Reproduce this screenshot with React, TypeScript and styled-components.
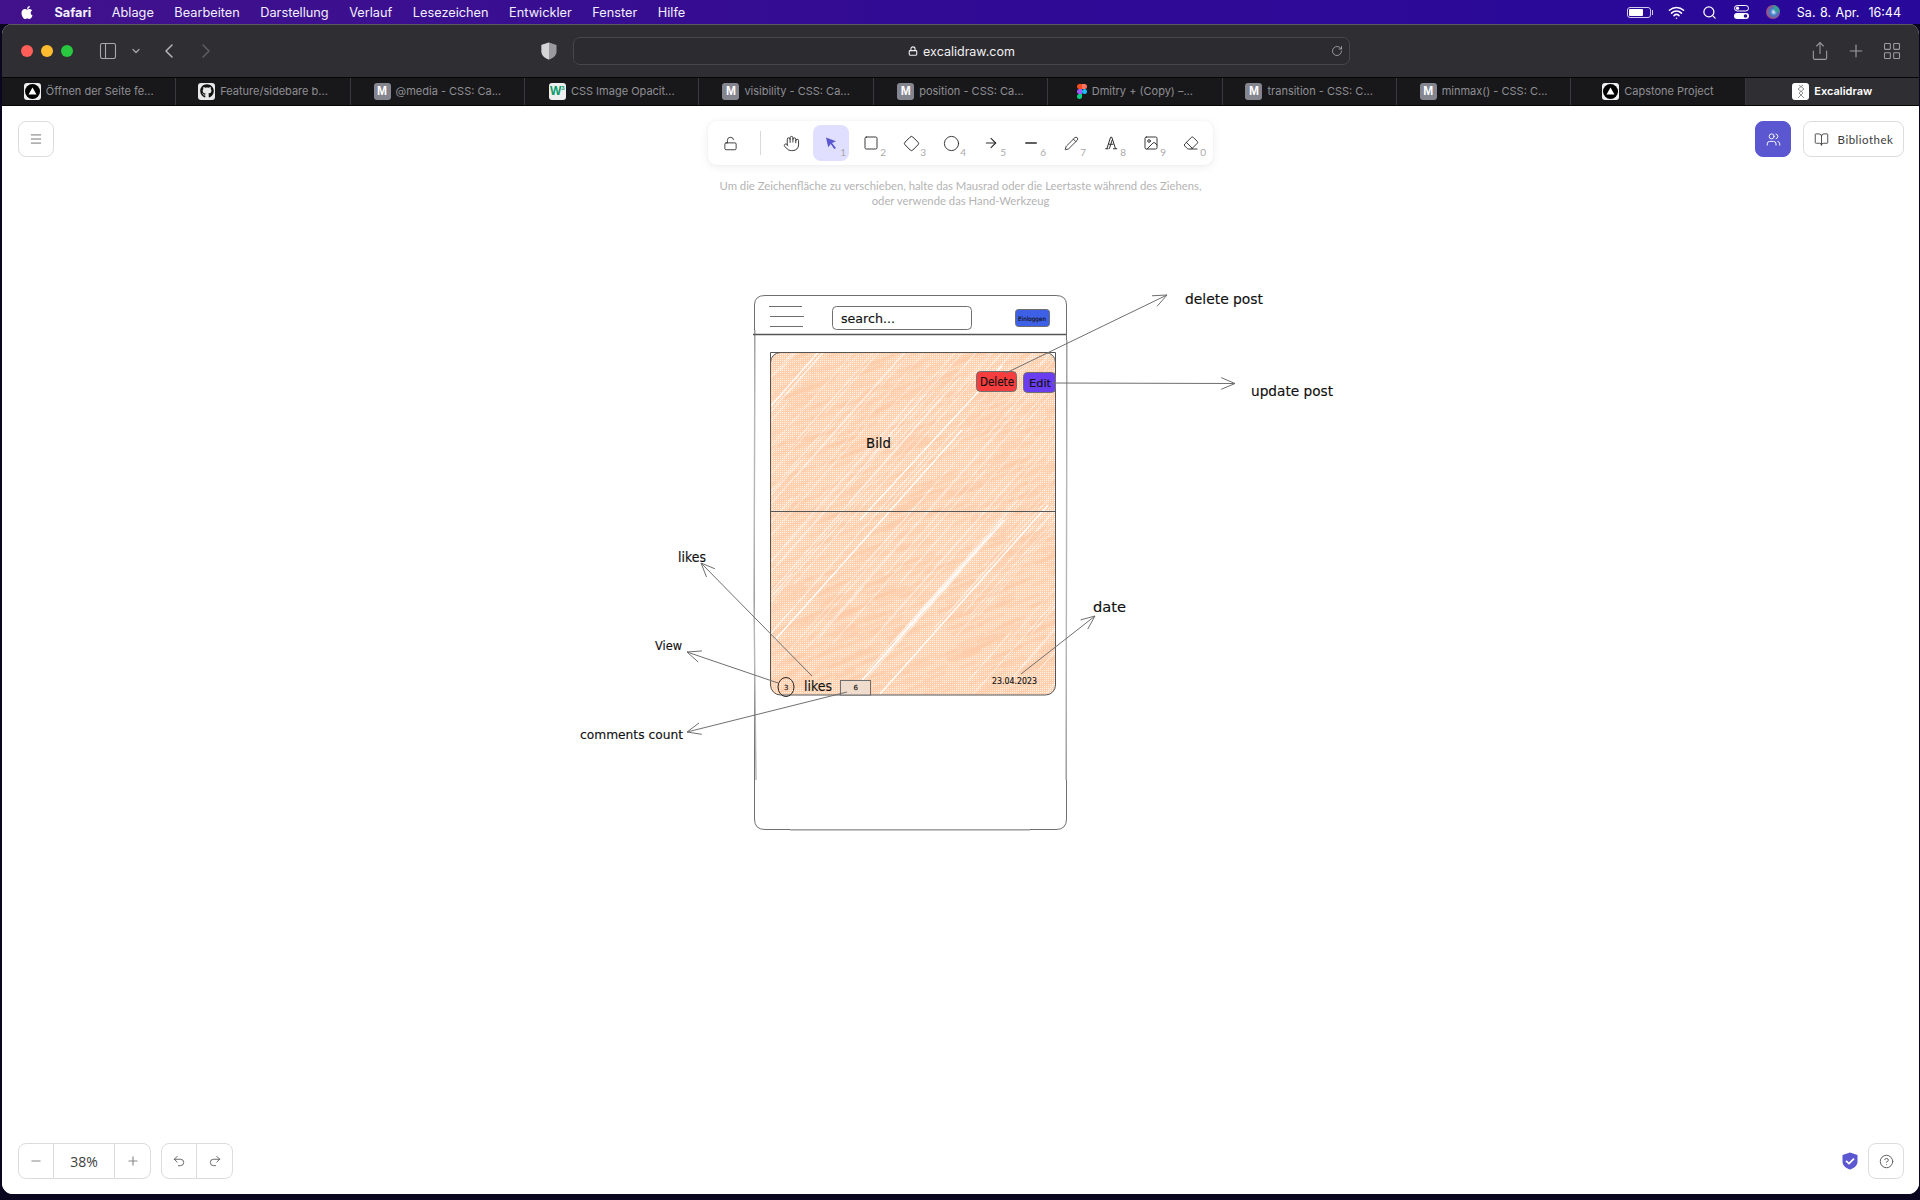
import React from "react";
import styled, { createGlobalStyle } from "styled-components";
import {
  ArrowRight,
  BookOpen,
  ChevronDown,
  ChevronLeft,
  ChevronRight,
  Circle,
  CircleHelp,
  Diamond,
  Eraser,
  Hand,
  Image as ImageIcon,
  LayoutGrid,
  Lock,
  LockOpen,
  Menu,
  Minus,
  PanelLeft,
  Pencil,
  Plus,
  Redo2,
  RotateCw,
  Search,
  Share,
  Square,
  Undo2,
  Users,
  Wifi,
} from "lucide-react";
import { FaApple, FaGithub } from "react-icons/fa";

const GlobalStyle = createGlobalStyle`
  html, body { margin: 0; padding: 0; background: #0b0620; }
  body { font-family: "Liberation Sans", Arial, sans-serif; }
  * { box-sizing: border-box; }
`;

const Screen = styled.div`
  width: 1920px;
  height: 1200px;
  display: flex;
  flex-direction: column;
  overflow: hidden;
  background: #0b0620;
`;

const MenuBar = styled.header`
  height: 24px;
  flex: none;
  display: flex;
  align-items: center;
  justify-content: space-between;
  padding: 0 19px 0 20px;
  color: #fff;
  font-family: "Inter", sans-serif;
  font-size: 12.5px;
  background: linear-gradient(90deg, #42128c 0%, #2f0a95 55%, #28089a 100%);
`;

const MenuList = styled.nav`
  display: flex;
  align-items: center;
  gap: 20.5px;
  font-size: 12.75px;
`;

const AppleMark = styled.span`
  display: flex;
  width: 14px;
`;

const MenuItem = styled.span<{ $bold?: boolean }>`
  font-weight: ${(p) => (p.$bold ? 700 : 400)};
  color: #f2effa;
`;

const StatusArea = styled.div`
  display: flex;
  align-items: center;
  gap: 17px;
`;

const BatteryBody = styled.span`
  position: relative;
  display: block;
  width: 24px;
  height: 11px;
  border: 1px solid #cfc9ea;
  border-radius: 3px;
  padding: 1px;
  &::before {
    content: "";
    display: block;
    width: 14px;
    height: 100%;
    background: #fff;
    border-radius: 1px;
  }
  &::after {
    content: "";
    position: absolute;
    right: -3px;
    top: 2px;
    width: 1px;
    height: 5px;
    background: #cfc9ea;
  }
`;

const Clock = styled.span`
  word-spacing: 1px;
  white-space: pre;
`;

const BrowserWindow = styled.div`
  flex: 1;
  display: flex;
  flex-direction: column;
  margin: 0 1px 6px 2px;
  border-radius: 10px 10px 11px 11px;
  overflow: hidden;
  background: #fff;
`;

const BrowserBar = styled.div`
  height: 53px;
  flex: none;
  display: flex;
  align-items: center;
  padding-left: 19px;
  background: #2f2e33;
  border-top: 1px solid #5b5a60;
  color: #a9a9ad;
`;

const TrafficLights = styled.div`
  display: flex;
  gap: 8px;
  width: 77px;
`;

const Light = styled.span<{ $color: string }>`
  width: 12px;
  height: 12px;
  border-radius: 50%;
  background: ${(p) => p.$color};
`;

const BarGroup = styled.div`
  display: flex;
  align-items: center;
  width: 475px;
  color: #a9a9ad;
`;

const SidebarChevron = styled.span`
  display: flex;
  margin-left: 12px;
`;

const BackButton = styled.span<{ $dim?: boolean }>`
  display: flex;
  margin-left: ${(p) => (p.$dim ? "13px" : "15px")};
  color: ${(p) => (p.$dim ? "#5e5d62" : "#b5b5b9")};
`;

const BarSpacer = styled.span`
  flex: 1;
`;

const UrlBar = styled.div`
  width: 777px;
  height: 28px;
  position: relative;
  display: flex;
  align-items: center;
  justify-content: center;
  gap: 5px;
  border: 1px solid #47464b;
  border-radius: 7px;
  background: #2c2b30;
  color: #f0f0f2;
  font-family: "Inter", sans-serif;
  font-size: 12.5px;
`;

const ReloadSlot = styled.span`
  position: absolute;
  right: 6px;
  top: 7px;
  display: flex;
  color: #b0b0b4;
`;

const BarActions = styled.div`
  margin-left: auto;
  display: flex;
  align-items: center;
  gap: 16px;
  padding-right: 17px;
  color: #9c9ca0;
`;

const ShieldSlot = styled.span`
  display: flex;
  width: 16px;
  margin-right: 16px;
`;

const TabBar = styled.div`
  height: 29px;
  flex: none;
  display: flex;
  background: #18181b;
  border-top: 1px solid #050505;
  border-bottom: 1px solid #050505;
`;

const Tab = styled.div<{ $active?: boolean }>`
  flex: 1;
  min-width: 0;
  display: flex;
  align-items: center;
  justify-content: center;
  gap: 5px;
  padding-bottom: 1px;
  font-family: "Inter", sans-serif;
  font-size: 11px;
  white-space: nowrap;
  color: ${(p) => (p.$active ? "#ffffff" : "#8f8f93")};
  font-weight: ${(p) => (p.$active ? 600 : 400)};
  background: ${(p) => (p.$active ? "#2f2e33" : "transparent")};
  border-right: 1px solid #3a3a3e;
  &:last-child {
    border-right: 0;
  }
`;

const Favicon = styled.span<{ $bg: string; $fg?: string }>`
  width: 17px;
  height: 17px;
  flex: none;
  display: flex;
  align-items: center;
  justify-content: center;
  border-radius: 3px;
  background: ${(p) => p.$bg};
  color: ${(p) => p.$fg || "#fff"};
  font-family: "Liberation Sans", sans-serif;
  font-size: 12px;
  font-weight: 700;
  line-height: 1;
`;

const FaviconSup = styled.sup`
  font-size: 6px;
  margin-top: -6px;
`;

const CanvasArea = styled.main`
  flex: 1;
  position: relative;
  background: #fff;
`;

const SketchLayer = styled.svg`
  position: absolute;
  inset: 0;
  width: 100%;
  height: 100%;
`;

const Overlay = styled.div`
  position: relative;
  height: 100%;
  display: flex;
  flex-direction: column;
  justify-content: space-between;
  padding: 15px 15px 15px 16px;
`;

const TopRow = styled.div`
  display: grid;
  grid-template-columns: 1fr auto 1fr;
  align-items: start;
`;

const IconButton = styled.button<{ $primary?: boolean }>`
  width: 36px;
  height: 36px;
  display: flex;
  align-items: center;
  justify-content: center;
  padding: 0;
  border: 1px solid ${(p) => (p.$primary ? "#5b57d1" : "#dcdcdc")};
  border-radius: 8px;
  background: ${(p) => (p.$primary ? "#5b57d1" : "#fff")};
  color: ${(p) => (p.$primary ? "#fff" : "#5a5a5a")};
`;

const ToolColumn = styled.div`
  display: flex;
  flex-direction: column;
  align-items: center;
  margin-left: -1px;
`;

const ToolBar = styled.div`
  width: 505px;
  height: 44px;
  display: flex;
  align-items: center;
  gap: 4px;
  padding: 0 2px 0 4px;
  background: #fff;
  border-radius: 8px;
  box-shadow: 0 0 1px rgba(0, 0, 0, 0.12), 0 2px 10px rgba(0, 0, 0, 0.07);
`;

const ToolDivider = styled.span`
  width: 1px;
  height: 24px;
  margin: 0 8px;
  background: #d9d9d9;
  flex: none;
`;

const ToolButton = styled.span<{ $active?: boolean }>`
  position: relative;
  width: 36px;
  height: 36px;
  flex: none;
  display: flex;
  align-items: center;
  justify-content: center;
  border-radius: 8px;
  background: ${(p) => (p.$active ? "#e0dfff" : "transparent")};
  color: ${(p) => (p.$active ? "#5b57d1" : "#2b2b2b")};
`;

const ToolKey = styled.span`
  position: absolute;
  right: 3px;
  bottom: 4px;
  font-family: "Lato", sans-serif;
  font-size: 10px;
  line-height: 1;
  color: #a9a9a9;
`;

const HintText = styled.p`
  margin: 13px 0 0;
  text-align: center;
  font-family: "Lato", sans-serif;
  font-size: 11.3px;
  line-height: 15px;
  color: #b4b4b4;
  white-space: nowrap;
`;

const RightTools = styled.div`
  display: flex;
  justify-content: flex-end;
  gap: 12px;
`;

const LibraryButton = styled.button`
  width: 101px;
  height: 36px;
  display: flex;
  align-items: center;
  justify-content: center;
  gap: 9px;
  padding: 0;
  border: 1px solid #dcdcdc;
  border-radius: 8px;
  background: #fff;
  color: #3b3b3b;
  font-family: "Lato", sans-serif;
  font-size: 11.5px;
  letter-spacing: 0.5px;
`;

const BottomRow = styled.div`
  display: flex;
  align-items: center;
`;

const ButtonGroup = styled.div`
  height: 36px;
  display: flex;
  margin-right: 10px;
  border: 1px solid #dcdcdc;
  border-radius: 8px;
  background: #fff;
  overflow: hidden;
`;

const GroupCell = styled.span<{ $wide?: boolean; $dark?: boolean }>`
  width: ${(p) => (p.$wide ? "61px" : "35px")};
  display: flex;
  align-items: center;
  justify-content: center;
  color: ${(p) => (p.$wide ? "#3d3d3d" : p.$dark ? "#555" : "#8a8a8a")};
  font-family: "Open Sans", sans-serif;
  font-size: 14px;
  border-right: 1px solid #dcdcdc;
  &:last-child {
    border-right: 0;
  }
`;

const FooterEnd = styled.div`
  margin-left: auto;
  display: flex;
  align-items: center;
  gap: 10px;
`;

const SketchText = styled.text<{ $size?: number }>`
  font-family: "DejaVu Sans", sans-serif;
  font-size: ${(p) => p.$size || 14}px;
  fill: #111;
  stroke: #111;
  stroke-width: 0.15px;
`;

const tabs = [
  { kind: "vercel", title: "Öffnen der Seite fe..." },
  { kind: "github", title: "Feature/sidebare b..." },
  { kind: "mdn", title: "@media - CSS: Ca..." },
  { kind: "w3", title: "CSS Image Opacit..." },
  { kind: "mdn", title: "visibility - CSS: Ca..." },
  { kind: "mdn", title: "position - CSS: Ca..." },
  { kind: "figma", title: "Dmitry + (Copy) –..." },
  { kind: "mdn", title: "transition - CSS: C..." },
  { kind: "mdn", title: "minmax() - CSS: C..." },
  { kind: "vercel", title: "Capstone Project" },
  { kind: "excalidraw", title: "Excalidraw", active: true },
];

const menuItems = [
  "Ablage",
  "Bearbeiten",
  "Darstellung",
  "Verlauf",
  "Lesezeichen",
  "Entwickler",
  "Fenster",
  "Hilfe",
];

const TabIcon = ({ kind }: { kind: string }) => {
  if (kind === "mdn") return <Favicon $bg="#85858f">M</Favicon>;
  if (kind === "github")
    return (
      <Favicon $bg="#e8e8e8" $fg="#111">
        <FaGithub size={14} />
      </Favicon>
    );
  if (kind === "w3")
    return (
      <Favicon $bg="#efefef" $fg="#0a9a68">
        W<FaviconSup>3</FaviconSup>
      </Favicon>
    );
  if (kind === "figma")
    return (
      <svg width="10" height="17" viewBox="0 0 10 15">
        <path d="M0 2.5A2.5 2.5 0 0 1 2.5 0H5v5H2.5A2.5 2.5 0 0 1 0 2.5z" fill="#f24e1e" />
        <path d="M5 0h2.5a2.5 2.5 0 0 1 0 5H5z" fill="#ff7262" />
        <path d="M0 7.5A2.5 2.5 0 0 1 2.5 5H5v5H2.5A2.5 2.5 0 0 1 0 7.5z" fill="#a259ff" />
        <circle cx="7.5" cy="7.5" r="2.5" fill="#1abcfe" />
        <path d="M0 12.5A2.5 2.5 0 0 1 2.5 10H5v2.5a2.5 2.5 0 0 1-5 0z" fill="#0acf83" />
      </svg>
    );
  if (kind === "excalidraw")
    return (
      <Favicon $bg="#fff">
        <svg width="12" height="15" viewBox="0 0 12 15" fill="none" stroke="#777" strokeWidth="0.8">
          <path d="M4 1l5 4-5 4 5 5M8 1L3 5l5 4-5 5" />
        </svg>
      </Favicon>
    );
  return (
    <Favicon $bg="#efefef">
      <svg width="15" height="15" viewBox="0 0 15 15">
        <circle cx="7.5" cy="7.5" r="7.5" fill="#000" />
        <path d="M7.5 3.6l4 7h-8z" fill="#fff" />
      </svg>
    </Favicon>
  );
};

// small seeded random, so the hatching looks the same every run
const makeRandom = (seed: number) => () => {
  seed = (seed * 16807) % 2147483647;
  return (seed - 1) / 2147483646;
};

const CardHatch = () => {
  const rnd = makeRandom(4711);
  const blotches = Array.from({ length: 650 }, (_, i) => {
    const x = 765 + rnd() * 292;
    const y = 352 + rnd() * 345;
    const len = 10 + rnd() * 22;
    return <line key={i} x1={x} y1={y} x2={x + len} y2={y - len * 0.4} />;
  });
  const streaks = Array.from({ length: 170 }, (_, i) => {
    const x = 640 + rnd() * 560;
    const y = 360 + rnd() * 340;
    const len = 40 + rnd() * 200;
    return (
      <line
        key={i}
        x1={x}
        y1={y}
        x2={x + len * 0.88}
        y2={y - len}
        strokeOpacity={0.45 + rnd() * 0.55}
      />
    );
  });
  return (
    <g clipPath="url(#cardClip)">
      <rect x="770" y="352" width="286" height="343" fill="url(#dither)" />
      <g stroke="#ffcba7" strokeOpacity="0.4" strokeWidth="3.5" strokeLinecap="round">
        {blotches}
      </g>
      <g stroke="#fff" strokeWidth="0.8">
        {streaks}
        <line x1="850" y1="694" x2="1004" y2="520" strokeWidth="1.5" />
        <line x1="880" y1="694" x2="1048" y2="505" strokeWidth="1.3" />
        <line x1="775" y1="640" x2="962" y2="430" strokeWidth="1.3" />
        <line x1="860" y1="520" x2="1002" y2="366" strokeWidth="1.3" />
      </g>
    </g>
  );
};

const ArrowLine = ({ x1, y1, x2, y2 }: { x1: number; y1: number; x2: number; y2: number }) => {
  const angle = Math.atan2(y2 - y1, x2 - x1);
  const head = 15;
  const spread = 0.4;
  const ax = x2 - head * Math.cos(angle - spread);
  const ay = y2 - head * Math.sin(angle - spread);
  const bx = x2 - head * Math.cos(angle + spread);
  const by = y2 - head * Math.sin(angle + spread);
  return <path d={`M${x1} ${y1}L${x2} ${y2}M${ax} ${ay}L${x2} ${y2}L${bx} ${by}`} />;
};

const Drawing = () => (
  <SketchLayer viewBox="2 106 1917 1088" preserveAspectRatio="none">
    <defs>
      <pattern id="dither" patternUnits="userSpaceOnUse" width="2" height="2">
        <rect width="2" height="2" fill="#ffd1af" />
        <rect width="1" height="1" fill="#fff5ec" />
      </pattern>
      <clipPath id="cardClip">
        <rect x="770.5" y="352.5" width="285" height="342.5" rx="10" />
      </clipPath>
    </defs>
    <CardHatch />
    <g fill="none" stroke="#6f6f6f" strokeWidth="1">
      <path d="M765 295.5H1056Q1066.5 295.5 1066.5 305V819Q1066.5 829.5 1056 829.5H765Q754.5 829.5 754.5 819V305Q754.5 295.5 765 295.5Z" />
      <path d="M755 330L754 600L756 780M1067 340L1066 780M790 830H1030" stroke="#b5b5b5" strokeWidth="1.4" />
      <path d="M753 334.5H1066" strokeWidth="1.4" stroke="#555" />
      <path d="M769 306.5H802M770 316.5H804M770 326.5H803" strokeWidth="1.2" />
      <rect x="832.5" y="306.5" width="139" height="23" rx="4" />
      <rect x="770.5" y="352.5" width="285" height="342.5" rx="10" stroke="#555" />
      <path d="M770.5 352.5H1055.5V511.5H770.5Z" stroke="#555" />
      <rect x="1015.5" y="309.5" width="34" height="17" rx="3" fill="#3e60e6" />
      <rect x="976.5" y="371.5" width="40" height="20" rx="4" fill="#f63e3e" />
      <rect x="1023.5" y="372.5" width="32" height="20" rx="4" fill="#6a3ef0" />
      <ellipse cx="786" cy="687" rx="8" ry="9.5" stroke="#222" />
      <rect x="840.5" y="680.5" width="30" height="14.5" fill="#efdccd" />
      <ArrowLine x1={1006} y1={373} x2={1167} y2={295} />
      <ArrowLine x1={1052} y1={383} x2={1235} y2={383.5} />
      <ArrowLine x1={812} y1={676} x2={701} y2={563} />
      <ArrowLine x1={778} y1={683} x2={687} y2={652} />
      <ArrowLine x1={847} y1={692} x2={687} y2={732} />
      <ArrowLine x1={1021} y1={674} x2={1095} y2={616} />
    </g>
    <SketchText x="841" y="323" $size={13} textLength={54} lengthAdjust="spacingAndGlyphs">search...</SketchText>
    <SketchText x="1018" y="321" $size={6} textLength={28} lengthAdjust="spacingAndGlyphs">Einloggen</SketchText>
    <SketchText x="980" y="386" $size={12} textLength={34} lengthAdjust="spacingAndGlyphs">Delete</SketchText>
    <SketchText x="1029" y="387" $size={11} textLength={22} lengthAdjust="spacingAndGlyphs">Edit</SketchText>
    <SketchText x="866" y="448" $size={14} textLength={25} lengthAdjust="spacingAndGlyphs">Bild</SketchText>
    <SketchText x="1185" y="304" $size={14} textLength={78} lengthAdjust="spacingAndGlyphs">delete post</SketchText>
    <SketchText x="1251" y="396" $size={14} textLength={82} lengthAdjust="spacingAndGlyphs">update post</SketchText>
    <SketchText x="678" y="562" $size={14} textLength={28} lengthAdjust="spacingAndGlyphs">likes</SketchText>
    <SketchText x="655" y="650" $size={13} textLength={27} lengthAdjust="spacingAndGlyphs">View</SketchText>
    <SketchText x="580" y="739" $size={13} textLength={103} lengthAdjust="spacingAndGlyphs">comments count</SketchText>
    <SketchText x="804" y="691" $size={14} textLength={28} lengthAdjust="spacingAndGlyphs">likes</SketchText>
    <SketchText x="784" y="690" $size={7}>3</SketchText>
    <SketchText x="853.5" y="690" $size={7}>6</SketchText>
    <SketchText x="992" y="684" $size={8} textLength={45} lengthAdjust="spacingAndGlyphs">23.04.2023</SketchText>
    <SketchText x="1093" y="612" $size={14} textLength={33} lengthAdjust="spacingAndGlyphs">date</SketchText>
  </SketchLayer>
);

const TextToolIcon = () => (
  <svg width="14" height="14" viewBox="0 0 17 17" fill="none" stroke="currentColor" strokeWidth="1.2">
    <path d="M1.5 15.5h4M11 15.5h5M3.5 15.5L8 1.5h1.5l4.5 14M5.5 10h6M6.5 15.5L10 4.5" />
  </svg>
);

const ToolIcons: { key: string; icon: React.ReactNode; active?: boolean }[] = [
  {
    key: "1",
    active: true,
    icon: (
      <svg width="16" height="16" viewBox="0 0 16 16">
        <path d="M3 2.5l10 3.8-4 1.6 4 5-1.8 1-3.4-5-2.6 3.3z" fill="currentColor" />
      </svg>
    ),
  },
  { key: "2", icon: <Square size={16} strokeWidth={1.4} /> },
  { key: "3", icon: <Diamond size={17} strokeWidth={1.4} /> },
  { key: "4", icon: <Circle size={17} strokeWidth={1.3} /> },
  { key: "5", icon: <ArrowRight size={16} strokeWidth={1.6} /> },
  { key: "6", icon: <Minus size={18} strokeWidth={1.8} /> },
  { key: "7", icon: <Pencil size={15} strokeWidth={1.4} /> },
  { key: "8", icon: <TextToolIcon /> },
  { key: "9", icon: <ImageIcon size={16} strokeWidth={1.4} /> },
  { key: "0", icon: <Eraser size={16} strokeWidth={1.4} /> },
];

const SwitchIcon = () => (
  <svg width="15" height="14" viewBox="0 0 15 14" fill="none">
    <rect x="0.5" y="0.5" width="14" height="5.5" rx="2.75" stroke="#fff" />
    <circle cx="3.5" cy="3.2" r="1.6" fill="#fff" />
    <rect x="0" y="8" width="15" height="6" rx="3" fill="#fff" />
    <circle cx="11.5" cy="11" r="1.8" fill="#2c0a97" />
  </svg>
);

const SiriIcon = () => (
  <svg width="14" height="14" viewBox="0 0 14 14">
    <defs>
      <radialGradient id="siri" cx="0.55" cy="0.5" r="0.6">
        <stop offset="0" stopColor="#e8f0ff" />
        <stop offset="0.4" stopColor="#3f7fc9" />
        <stop offset="1" stopColor="#c43a6a" />
      </radialGradient>
    </defs>
    <circle cx="7" cy="7" r="7" fill="url(#siri)" />
    <path d="M7 0a7 7 0 0 1 7 7H9z" fill="#2fa58f" opacity="0.85" />
  </svg>
);

const PrivacyShield = () => (
  <svg width="16" height="18" viewBox="0 0 16 18">
    <path d="M8 0.5l7.5 2.5v6.5c0 4-3.4 6.8-7.5 8-4.1-1.2-7.5-4-7.5-8V3z" fill="#9a9a9f" />
    <path d="M8 0.5l7.5 2.5v6.5c0 4-3.4 6.8-7.5 8z" fill="#d5d5d8" transform="matrix(-1 0 0 1 16 0)" />
  </svg>
);

const ActiveShield = () => (
  <svg width="16" height="18" viewBox="0 0 16 18">
    <path d="M8 0.5l7.5 2.5v6.5c0 4-3.4 6.8-7.5 8-4.1-1.2-7.5-4-7.5-8V3z" fill="#5b57d1" />
    <path d="M4 8.8l3 2.8 5-5" fill="none" stroke="#fff" strokeWidth="1.7" />
  </svg>
);

export default function App() {
  return (
    <Screen>
      <GlobalStyle />
      <MenuBar>
        <MenuList>
          <AppleMark>
            <FaApple size={15} />
          </AppleMark>
          <MenuItem $bold>Safari</MenuItem>
          {menuItems.map((item) => (
            <MenuItem key={item}>{item}</MenuItem>
          ))}
        </MenuList>
        <StatusArea>
          <BatteryBody />
          <Wifi size={17} strokeWidth={2.2} />
          <Search size={15} strokeWidth={2} />
          <SwitchIcon />
          <SiriIcon />
          <Clock>Sa. 8. Apr.  16:44</Clock>
        </StatusArea>
      </MenuBar>
      <BrowserWindow>
        <BrowserBar>
          <TrafficLights>
            <Light $color="#ff5f57" />
            <Light $color="#febc2e" />
            <Light $color="#28c840" />
          </TrafficLights>
          <BarGroup>
            <PanelLeft size={20} strokeWidth={1.3} />
            <SidebarChevron>
              <ChevronDown size={12} strokeWidth={2.4} />
            </SidebarChevron>
            <BackButton>
              <ChevronLeft size={24} strokeWidth={1.5} />
            </BackButton>
            <BackButton $dim>
              <ChevronRight size={24} strokeWidth={1.5} />
            </BackButton>
            <BarSpacer />
            <ShieldSlot>
              <PrivacyShield />
            </ShieldSlot>
          </BarGroup>
          <UrlBar>
            <Lock size={10} strokeWidth={2.6} />
            excalidraw.com
            <ReloadSlot>
              <RotateCw size={12} strokeWidth={1.6} />
            </ReloadSlot>
          </UrlBar>
          <BarActions>
            <Share size={20} strokeWidth={1.3} />
            <Plus size={20} strokeWidth={1.4} />
            <LayoutGrid size={20} strokeWidth={1.3} />
          </BarActions>
        </BrowserBar>
        <TabBar>
          {tabs.map((tab, i) => (
            <Tab key={i} $active={tab.active}>
              <TabIcon kind={tab.kind} />
              {tab.title}
            </Tab>
          ))}
        </TabBar>
        <CanvasArea>
          <Drawing />
          <Overlay>
            <TopRow>
              <IconButton>
                <Menu size={14} strokeWidth={1.4} />
              </IconButton>
              <ToolColumn>
                <ToolBar>
                  <ToolButton>
                    <LockOpen size={15} strokeWidth={1.4} />
                  </ToolButton>
                  <ToolDivider />
                  <ToolButton>
                    <Hand size={17} strokeWidth={1.3} />
                  </ToolButton>
                  {ToolIcons.map((tool) => (
                    <ToolButton key={tool.key} $active={tool.active}>
                      {tool.icon}
                      <ToolKey>{tool.key}</ToolKey>
                    </ToolButton>
                  ))}
                </ToolBar>
                <HintText>
                  Um die Zeichenfläche zu verschieben, halte das Mausrad oder die Leertaste während des Ziehens,
                  <br />
                  oder verwende das Hand-Werkzeug
                </HintText>
              </ToolColumn>
              <RightTools>
                <IconButton $primary>
                  <Users size={15} strokeWidth={1.5} />
                </IconButton>
                <LibraryButton>
                  <BookOpen size={15} strokeWidth={1.4} />
                  Bibliothek
                </LibraryButton>
              </RightTools>
            </TopRow>
            <BottomRow>
              <ButtonGroup>
                <GroupCell>
                  <Minus size={14} strokeWidth={2} />
                </GroupCell>
                <GroupCell $wide>38%</GroupCell>
                <GroupCell>
                  <Plus size={14} strokeWidth={2} />
                </GroupCell>
              </ButtonGroup>
              <ButtonGroup>
                <GroupCell $dark>
                  <Undo2 size={14} strokeWidth={1.5} />
                </GroupCell>
                <GroupCell $dark>
                  <Redo2 size={14} strokeWidth={1.5} />
                </GroupCell>
              </ButtonGroup>
              <FooterEnd>
                <ActiveShield />
                <IconButton>
                  <CircleHelp size={15} strokeWidth={1.5} />
                </IconButton>
              </FooterEnd>
            </BottomRow>
          </Overlay>
        </CanvasArea>
      </BrowserWindow>
    </Screen>
  );
}
